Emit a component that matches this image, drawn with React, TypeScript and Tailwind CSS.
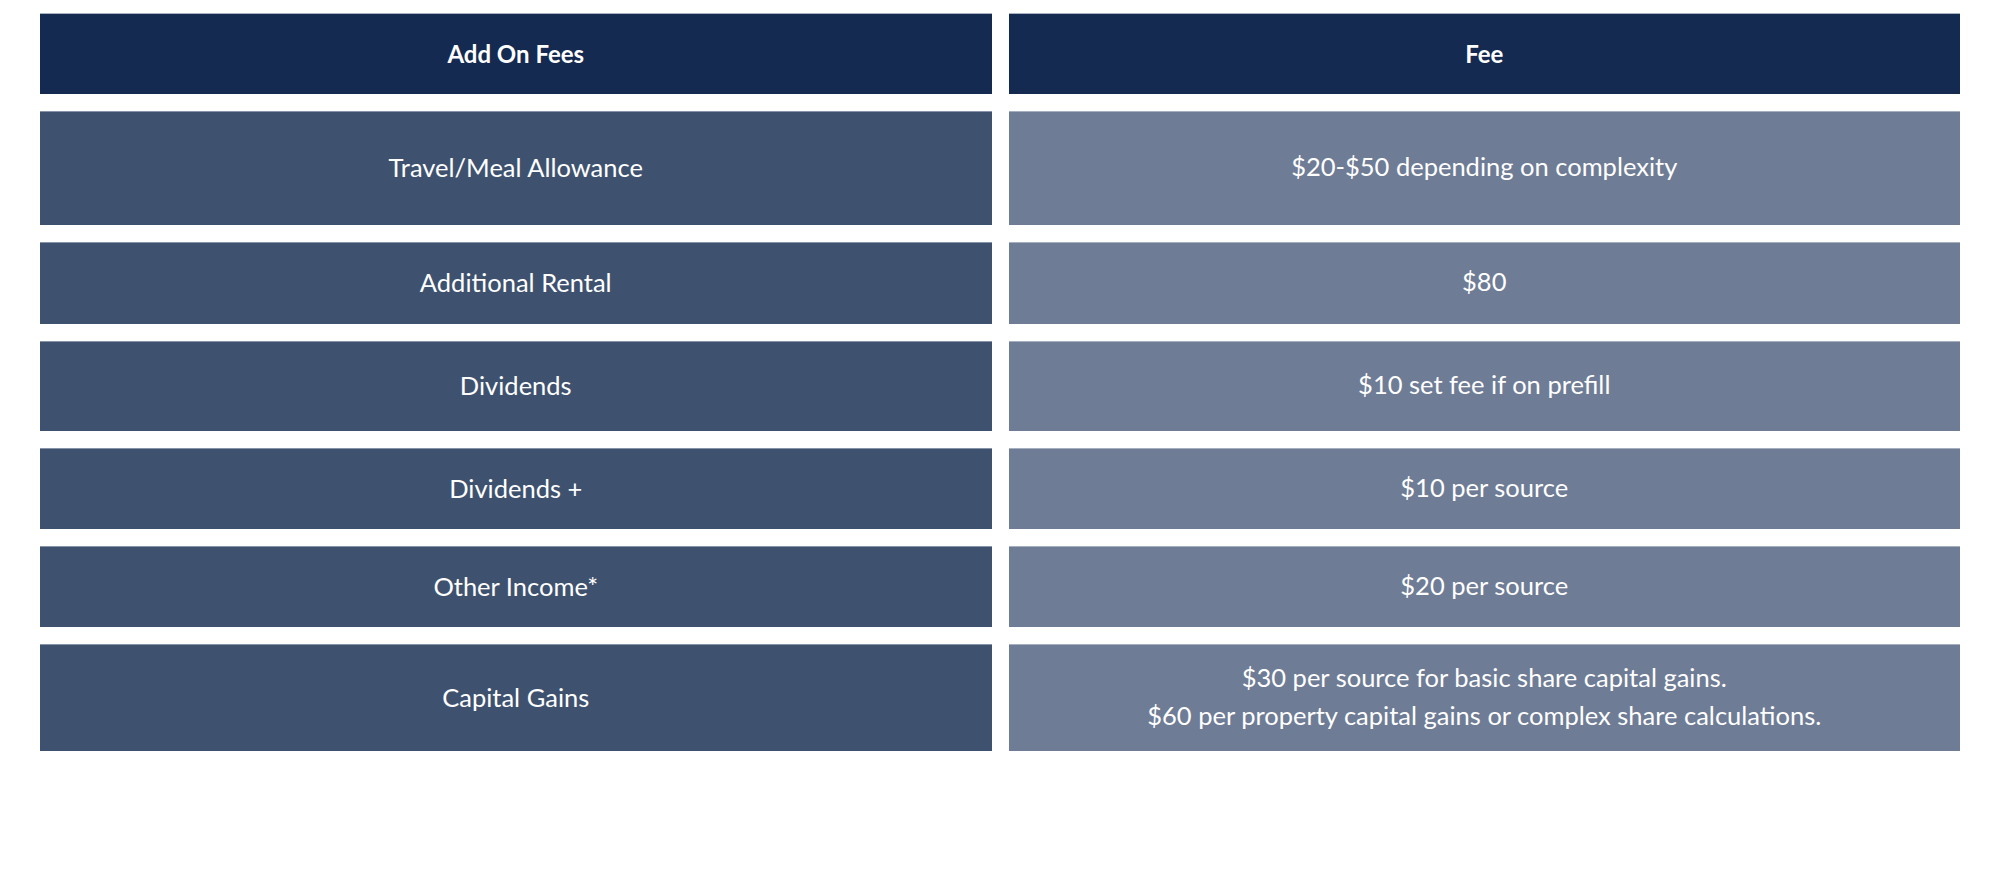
import React from "react";

const rows: { label: string; fee: string[]; h: string }[] = [
  { label: "Travel/Meal Allowance", fee: ["$20-$50 depending on complexity"], h: "h-[114px]" },
  { label: "Additional Rental", fee: ["$80"], h: "h-[82px]" },
  { label: "Dividends", fee: ["$10 set fee if on prefill"], h: "h-[90px]" },
  { label: "Dividends +", fee: ["$10 per source"], h: "h-[81px]" },
  { label: "Other Income*", fee: ["$20 per source"], h: "h-[81px]" },
  {
    label: "Capital Gains",
    fee: [
      "$30 per source for basic share capital gains.",
      "$60 per property capital gains or complex share calculations.",
    ],
    h: "h-[107px]",
  },
];

export default function App() {
  return (
    <div
      className="w-[2000px] h-[875px] bg-white pt-[13px] px-[40px]"
      style={{ fontFamily: "Lato, 'Open Sans', sans-serif" }}
    >
      <div className="grid grid-cols-2 gap-x-[17px] gap-y-[17px] text-white text-[25.5px] leading-[32px]">
        <div className="h-[81px] bg-[#142a51] border-t border-[#a9b3c2] flex items-center justify-center font-bold text-[24px]">
          Add On Fees
        </div>
        <div className="h-[81px] bg-[#142a51] border-t border-[#a9b3c2] flex items-center justify-center font-bold text-[24px]">
          Fee
        </div>
        {rows.map((r) => (
          <React.Fragment key={r.label}>
            <div
              className={`${r.h} bg-[#3e5270] border-t border-[#8693a8] flex items-center justify-center pb-[3px]`}
            >
              {r.label}
            </div>
            <div
              className={`${r.h} bg-[#6e7c96] border-t border-[#a5afbf] flex flex-col items-center justify-center leading-[38px] text-center pb-[5px]`}
            >
              {r.fee.map((f) => (
                <div key={f}>{f}</div>
              ))}
            </div>
          </React.Fragment>
        ))}
      </div>
    </div>
  );
}
